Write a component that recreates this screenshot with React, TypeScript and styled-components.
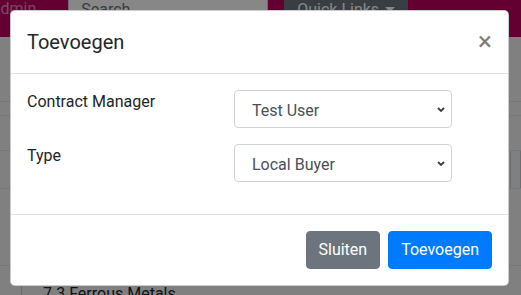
import styled, { createGlobalStyle } from "styled-components";

const FONT = `"Segoe UI", Roboto, "Helvetica Neue", Arial, sans-serif`;

const GlobalStyle = createGlobalStyle`
  html, body {
    margin: 0;
    padding: 0;
  }
  body {
    font-family: ${FONT};
    font-size: 16px;
    line-height: 1.5;
    color: #212529;
    background: #f2f2f2;
  }
  * {
    box-sizing: border-box;
  }
`;

const Screen = styled.div`
  position: relative;
  width: 521px;
  height: 295px;
  overflow: hidden;
`;

const Page = styled.div`
  display: flex;
  flex-direction: column;
  background: #f2f2f2;
  height: 100%;
`;

const Navbar = styled.nav`
  display: flex;
  align-items: center;
  height: 56px;
  margin-top: -19px;
  padding: 8px 0;
  background: #bb005e;
  flex-shrink: 0;
`;

const Brand = styled.span`
  margin-left: -10px;
  font-size: 16px;
  color: rgba(255, 255, 255, 0.55);
`;

const SearchInput = styled.input`
  margin-left: 32px;
  width: 200px;
  height: 38px;
  padding: 6px 12px;
  border: 1px solid #ced4da;
  background: #fff;
  font-family: ${FONT};
  font-size: 16px;
  &::placeholder {
    color: #6c757d;
  }
`;

const QuickLinks = styled.button`
  display: flex;
  align-items: center;
  margin-left: 16px;
  height: 38px;
  padding: 6px 12px;
  border: 1px solid #6c757d;
  border-radius: 4px;
  background: #6c757d;
  color: #fff;
  font-family: ${FONT};
  font-size: 16px;

  &::after {
    content: "";
    margin-left: 6px;
    border-top: 5px solid;
    border-left: 5px solid transparent;
    border-right: 5px solid transparent;
  }
`;

const Content = styled.div`
  display: flex;
  flex-direction: column;
`;

const TableRow = styled.div<{ $height: number }>`
  display: flex;
  height: ${(p) => p.$height + 1}px;
  border-bottom: 1px solid #dee2e6;
  flex-shrink: 0;
`;

const SideCell = styled.div`
  margin-left: 510px;
  width: 11px;
  border-left: 1px solid #c9ced3;
  border-right: 1px solid #c9ced3;
`;

const TextRow = styled.div`
  display: flex;
  flex: 1;
`;

const TextCell = styled.div`
  margin-left: 21px;
  padding: 16px 0 0 21px;
  border-left: 1px solid #c9ced3;
  color: #212529;
`;

const Backdrop = styled.div`
  position: absolute;
  inset: 0;
  background: rgba(0, 0, 0, 0.47);
`;

const Modal = styled.div`
  position: absolute;
  top: 10px;
  left: 10px;
  width: 499px;
  display: flex;
  flex-direction: column;
  background: #fff;
  border: 1px solid rgba(0, 0, 0, 0.2);
  border-radius: 5px;
`;

const ModalHeader = styled.div`
  display: flex;
  align-items: flex-start;
  justify-content: space-between;
  padding: 16px;
  border-bottom: 1px solid #dee2e6;
`;

const ModalTitle = styled.h5`
  margin: 0;
  font-size: 20px;
  font-weight: 400;
  line-height: 1.5;
  color: #212529;
`;

const CloseButton = styled.button`
  margin: -16px -16px -16px auto;
  padding: 17px 16px 15px;
  border: 0;
  background: transparent;
  font-family: ${FONT};
  font-size: 26px;
  font-weight: 400;
  line-height: 1;
  color: #7b7b7b;
`;

const ModalBody = styled.div`
  padding: 16px;
`;

const FormGroup = styled.div`
  display: grid;
  grid-template-columns: 207px 218px;
  margin-bottom: 16px;
`;

const Label = styled.label`
  font-size: 16px;
  line-height: 1.5;
  color: #212529;
`;

const SelectWrap = styled.div`
  position: relative;
`;

const Select = styled.select`
  display: block;
  width: 100%;
  height: 38px;
  padding: 7px 28px 5px 17px;
  border: 1px solid #ced4da;
  border-radius: 4px;
  background: #fff;
  font-family: ${FONT};
  font-size: 16px;
  color: #495057;
  appearance: none;
  -webkit-appearance: none;
  outline: none;
`;

const Chevron = styled.svg`
  position: absolute;
  right: 7px;
  top: 50%;
  margin-top: -2px;
  pointer-events: none;
`;

const ModalFooter = styled.div`
  display: flex;
  align-items: center;
  justify-content: flex-end;
  padding: 12px;
  border-top: 1px solid #dee2e6;
`;

const Button = styled.button<{ $variant: "secondary" | "primary" }>`
  margin: 4px;
  padding: 6px 12px;
  border: 1px solid ${(p) => (p.$variant === "primary" ? "#007bff" : "#6c757d")};
  border-radius: 4px;
  background: ${(p) => (p.$variant === "primary" ? "#007bff" : "#6c757d")};
  color: #fff;
  font-family: ${FONT};
  font-size: 16px;
  line-height: 1.5;
`;

const ChevronIcon = () => (
  <Chevron width="8" height="5" viewBox="0 0 8 5">
    <path d="M1 1l3 3 3-3" fill="none" stroke="#3c3c3c" strokeWidth="1.8" />
  </Chevron>
);

const App = () => {
  return (
    <>
      <GlobalStyle />
      <Screen>
        <Page>
          <Navbar>
            <Brand>Admin</Brand>
            <SearchInput placeholder="Search" />
            <QuickLinks>Quick Links</QuickLinks>
          </Navbar>
          <Content>
            <TableRow $height={64} />
            <TableRow $height={13} />
            <TableRow $height={34} />
            <TableRow $height={37}>
              <SideCell />
            </TableRow>
            <TableRow $height={76} />
          </Content>
          <TextRow>
            <TextCell>7.3 Ferrous Metals</TextCell>
          </TextRow>
        </Page>
        <Backdrop />
        <Modal>
          <ModalHeader>
            <ModalTitle>Toevoegen</ModalTitle>
            <CloseButton aria-label="Close">×</CloseButton>
          </ModalHeader>
          <ModalBody>
            <FormGroup>
              <Label>Contract Manager</Label>
              <SelectWrap>
                <Select defaultValue="test">
                  <option value="test">Test User</option>
                </Select>
                <ChevronIcon />
              </SelectWrap>
            </FormGroup>
            <FormGroup>
              <Label>Type</Label>
              <SelectWrap>
                <Select defaultValue="local">
                  <option value="local">Local Buyer</option>
                </Select>
                <ChevronIcon />
              </SelectWrap>
            </FormGroup>
          </ModalBody>
          <ModalFooter>
            <Button $variant="secondary">Sluiten</Button>
            <Button $variant="primary">Toevoegen</Button>
          </ModalFooter>
        </Modal>
      </Screen>
    </>
  );
};

export default App;
